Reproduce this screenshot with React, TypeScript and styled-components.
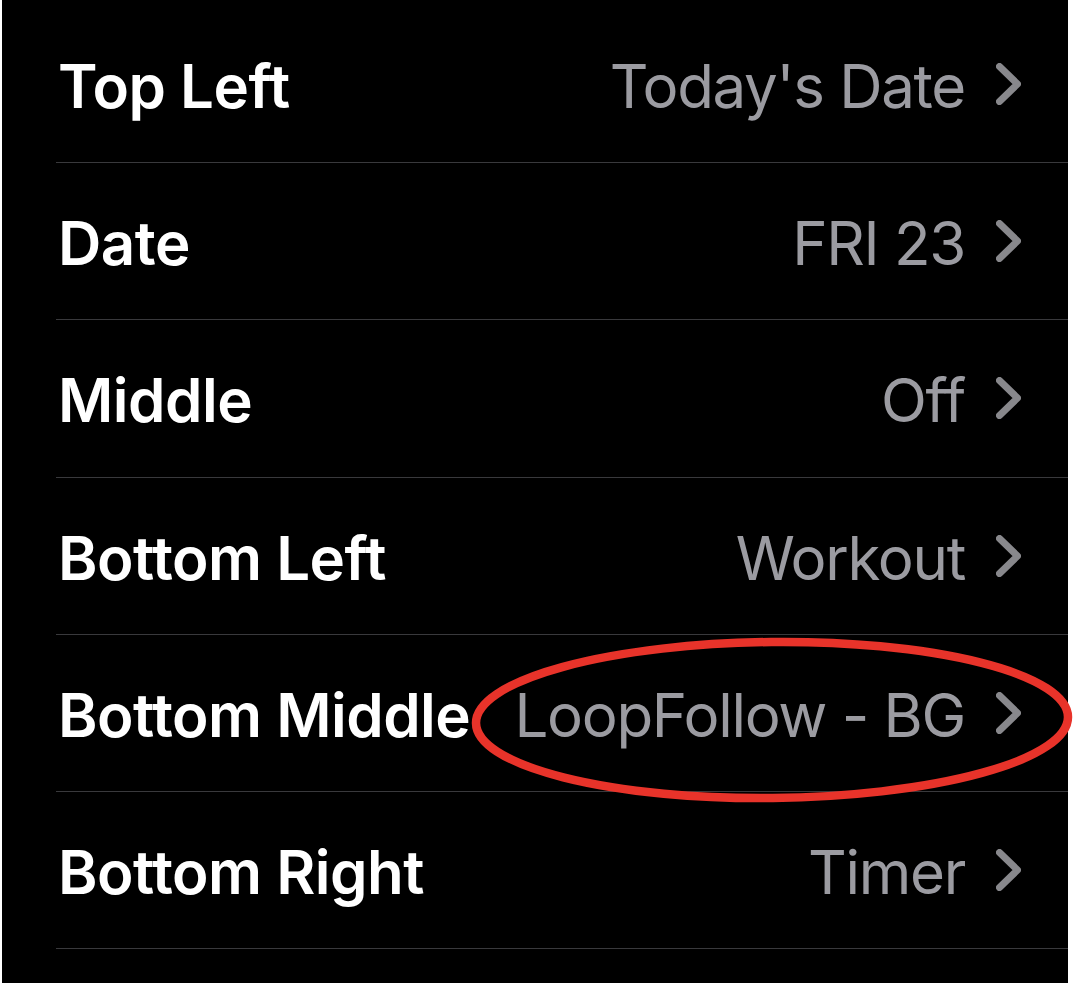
import React, { FC } from 'react'
import styled, { createGlobalStyle } from 'styled-components'

const GlobalStyle = createGlobalStyle`
  html, body {
    margin: 0;
    padding: 0;
    background: #fff;
  }
`

const Page = styled.div`
  position: relative;
  width: 1074px;
  height: 988px;
  overflow: hidden;
`

const Screen = styled.div`
  margin-left: 2px;
  width: 1066px;
  height: 983px;
  padding-top: 6px;
  box-sizing: border-box;
  background: #000;
  font-family: Inter, 'Noto Sans', sans-serif;
`

const Row = styled.div`
  display: flex;
  align-items: center;
  justify-content: space-between;
  height: 157.2px;
  margin-left: 54px;
  padding: 4px 47px 0 2px;
  box-sizing: border-box;
  border-bottom: 1px solid #39393c;
`

const Label = styled.span`
  color: #fff;
  font-size: 60px;
  font-weight: 600;
  letter-spacing: -0.5px;
  white-space: nowrap;
`

const Value = styled.span`
  display: flex;
  align-items: center;
  gap: 31px;
  color: #9b9ba1;
  font-size: 60px;
  font-weight: 400;
  letter-spacing: -1.3px;
  white-space: nowrap;
`

const Chevron = styled.svg`
  width: 25px;
  height: 42px;
  flex: none;
  margin-top: -4px;
`

// hand-drawn red annotation over the "Bottom Middle" row
const Annotation = styled.svg`
  position: absolute;
  left: 0;
  top: 0;
  pointer-events: none;
`

const ChevronIcon: FC = () => (
  <Chevron viewBox="0 0 25 42">
    <path
      d="M3.5 3.5 L21.5 21 L3.5 38.5"
      fill="none"
      stroke="#88888c"
      strokeWidth="7"
      strokeLinecap="round"
      strokeLinejoin="round"
    />
  </Chevron>
)

const rows = [
  { label: 'Top Left', value: "Today's Date" },
  { label: 'Date', value: 'FRI 23' },
  { label: 'Middle', value: 'Off' },
  { label: 'Bottom Left', value: 'Workout' },
  { label: 'Bottom Middle', value: 'LoopFollow - BG' },
  { label: 'Bottom Right', value: 'Timer' },
]

const App: FC = () => (
  <Page>
    <GlobalStyle />
    <Screen>
      {rows.map((r) => (
        <Row key={r.label}>
          <Label>{r.label}</Label>
          <Value>
            {r.value}
            <ChevronIcon />
          </Value>
        </Row>
      ))}
    </Screen>
    <Annotation width="1074" height="988" viewBox="0 0 1074 988">
      <ellipse cx="772" cy="720" rx="296" ry="78" fill="none" stroke="#e8332a" strokeWidth="8.5" transform="rotate(-0.6 772 720)" />
    </Annotation>
  </Page>
)

export default App
